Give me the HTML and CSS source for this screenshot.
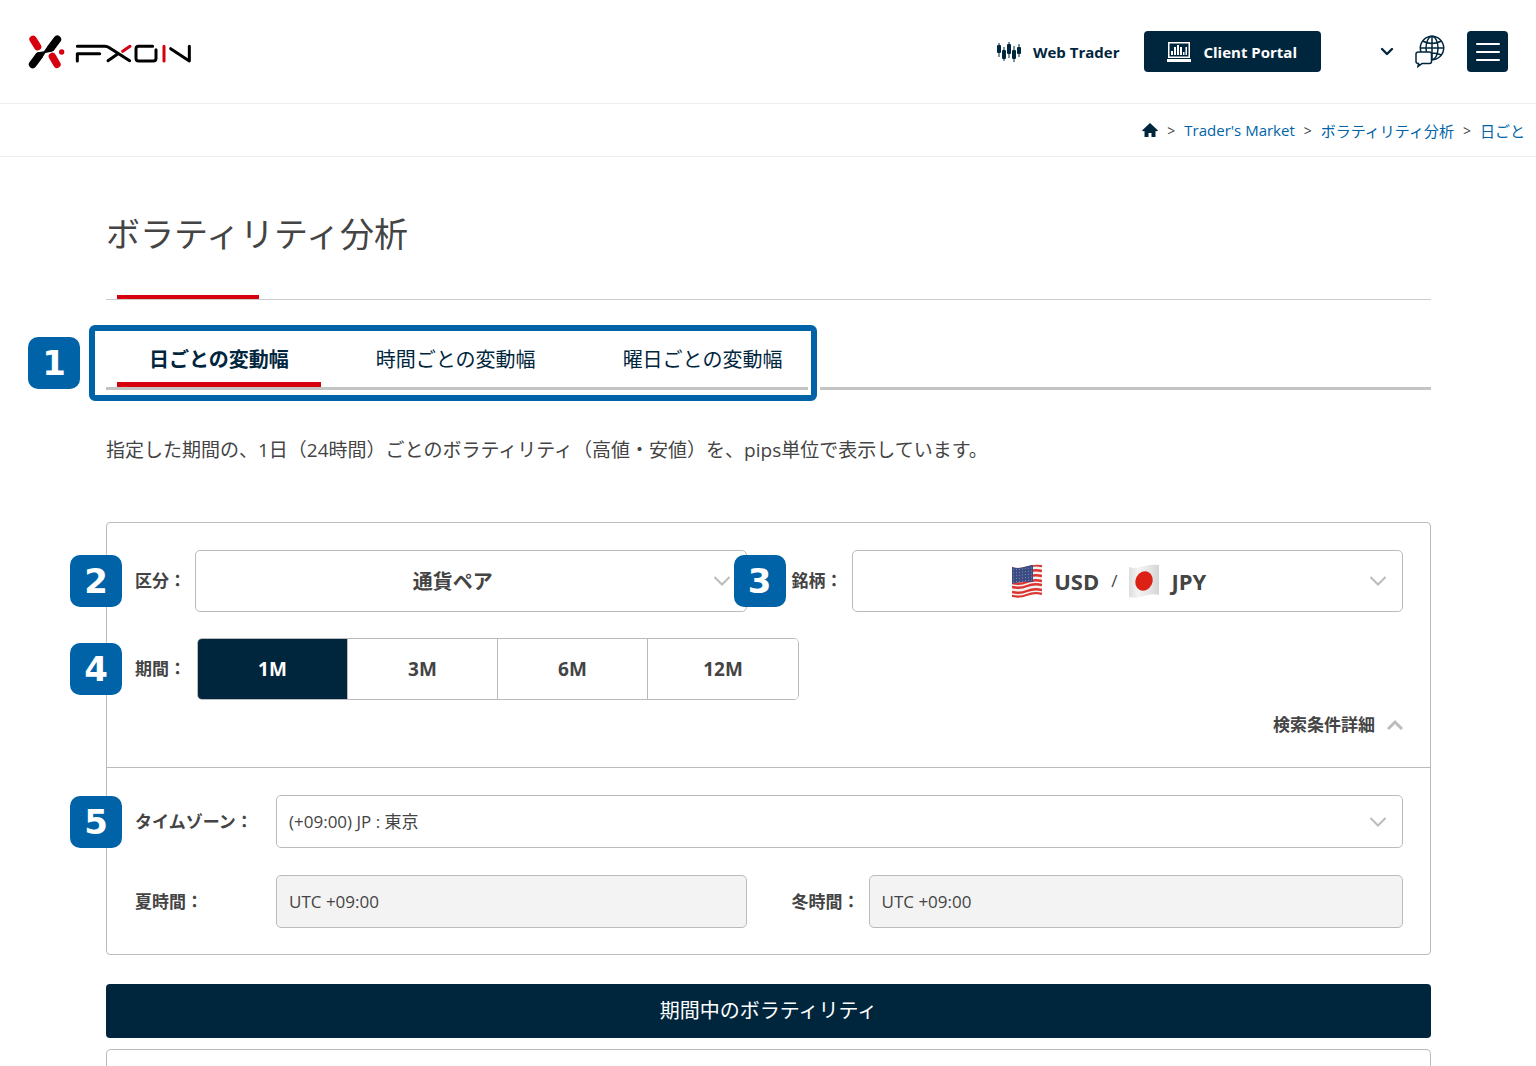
FILE: index.html
```html
<!DOCTYPE html>
<html lang="ja">
<head>
<meta charset="utf-8">
<meta name="viewport" content="width=device-width, initial-scale=1">
<title>ボラティリティ分析 | FXON</title>
<link rel="stylesheet" href="styles.css">
</head>
<body>
<header class="header">
  <a class="logo" href="#" aria-label="FXON">
    <svg viewBox="54 44 492 100" width="164" height="34" fill="none" stroke-linecap="round" stroke-linejoin="round">
      <path d="M69 56L83 78" stroke="#d7000f" stroke-width="22"/>
      <path d="M127 107L141 131" stroke="#d7000f" stroke-width="22"/>
      <path d="M142 56L124 80M86 107L68 131" stroke="#000" stroke-width="23"/>
      <path d="M115 73L102 92L84 95Q79 97 76 101L95 114L106 97L124 93Q130 92 134 87Z" fill="#000"/>
      <circle cx="155" cy="94" r="8" fill="#d7000f"/>
      <g stroke="#000" stroke-width="9">
        <path d="M202 77H284Q292 77 298 81L359 120M202 121V99H269M294 120L324 99"/>
        <path d="M428 77H386Q378 77 378 85V113Q378 121 386 121H430Q438 121 438 113V87"/>
        <path d="M482 84L538 121V77"/>
      </g>
      <path d="M338 92L360 77M462 77V121" stroke="#d7000f" stroke-width="9"/>
    </svg>
  </a>
  <nav class="header-nav" aria-label="メイン">
    <a class="trader" href="#">
      <svg width="25" height="20" viewBox="0 0 25 20" fill="#00263e" aria-hidden="true">
        <path d="M1.500 1h1v14h-1zM6.500 5h1v14h-1zM11.500 0h1v16h-1zM16.500 4h1v16h-1zM21.500 2h1v13h-1z"/>
        <rect x="0" y="3" width="4" height="8" rx="1"/><rect x="5" y="8" width="4" height="9" rx="1"/><rect x="10" y="2" width="4" height="10" rx="1"/><rect x="15" y="8" width="4" height="9" rx="1"/><rect x="20" y="5" width="4" height="7" rx="1"/>
      </svg>
      Web Trader
    </a>
    <a class="portal" href="#">
      <svg width="24" height="20" viewBox="0 0 24 20" fill="#fff" aria-hidden="true">
        <path d="M1 0h22v16H1zM2.500 1.500v13h19v-13z" fill-rule="evenodd"/>
        <path d="M4 9h2v4H4zM7 5h2v8H7zM10 3h2v10h-2zM13 5h2v8h-2zM16 10h1.500v3H16zM18.500 5h1.500v8h-1.500zM0 17h24v3H0z"/>
      </svg>
      Client Portal
    </a>
    <button class="plain account" type="button" aria-label="アカウント">
      <svg width="14" height="10" viewBox="0 0 14 10" fill="none" stroke="#00263e" stroke-width="2.400" stroke-linecap="round" stroke-linejoin="round"><path d="M2 2L7 7L12 2"/></svg>
    </button>
    <button class="plain language" type="button" aria-label="言語">
      <svg width="30" height="34" viewBox="0 0 30 34" fill="none" stroke="#00263e" stroke-width="1.500">
        <circle cx="17" cy="13" r="11.700"/><ellipse cx="17" cy="13" rx="6" ry="11.700"/><path d="M17 1V25M5.500 13H29M7.500 6Q17 11 26.500 6M7.500 20Q17 16 26.500 20"/>
        <path d="M3.500 17H14.500Q16.500 17 16.500 19V26.500Q16.500 28.500 14.500 28.500H7L3 31.500L3.500 28.500Q1 28.500 1 26.500V19Q1 17 3.500 17Z" fill="#fff"/>
        <path d="M3.500 29H7L2.800 32Z" fill="#00263e" stroke="none"/>
      </svg>
    </button>
    <button class="menu" type="button" aria-label="メニュー">
      <svg width="24" height="20" viewBox="0 0 24 20" stroke="#fff" stroke-width="2" stroke-linecap="round"><path d="M1 2H23M1 10H23M1 18H23"/></svg>
    </button>
  </nav>
</header>

<nav class="breadcrumb" aria-label="パンくず">
  <a class="home" href="#" aria-label="ホーム"><svg width="16" height="14" viewBox="0 0 16 14" fill="#00263e"><path d="M8 0L16 7.500Q15 8.500 13.500 8V14H9.500V10H6.500V14H2.500V8Q1 8.500 0 7.500Z"/></svg></a>
  <span>&gt;</span><a href="#">Trader's Market</a>
  <span>&gt;</span><a href="#">ボラティリティ分析</a>
  <span>&gt;</span><a href="#">日ごと</a>
</nav>

<main class="main">
  <h1 class="title">ボラティリティ分析</h1>

  <div class="tabs-area">
    <nav class="tabs" aria-label="変動幅">
      <a class="tab tab-active" href="#" aria-current="page">日ごとの変動幅</a>
      <a class="tab" href="#">時間ごとの変動幅</a>
      <a class="tab" href="#">曜日ごとの変動幅</a>
    </nav>
    <div class="tabs-frame"></div>
    <span class="badge badge-tabs">1</span>
  </div>

  <p class="lead">指定した期間の、1日（24時間）ごとのボラティリティ（高値・安値）を、pips単位で表示しています。</p>

  <form class="filters">
    <div class="basic">
      <div class="row">
        <span class="badge">2</span>
        <div class="field">
          <label class="label" for="category">区分：</label>
          <div class="picker">
            <select class="control tall centered" id="category"><option>通貨ペア</option></select>
            <svg class="arrow" width="18" height="12" viewBox="0 0 18 12"><path d="M1.500 2L9 9.500L16.500 2"/></svg>
          </div>
        </div>
        <div class="field">
          <span class="badge badge-symbol">3</span>
          <span class="label" id="symbol-label">銘柄：</span>
          <div class="picker">
            <button class="control tall symbol" type="button" aria-haspopup="listbox" aria-labelledby="symbol-label symbol">
              <span class="pair" id="symbol">
                <svg width="30" height="34" viewBox="0 0 30 34" aria-hidden="true">
                  <defs>
                    <clipPath id="wave"><path d="M0 3Q7 5 14 2.500T30 1V31Q22 29 15 32T0 33Z"/></clipPath>
                    <linearGradient id="cloth"><stop offset="0" stop-color="#ddd"/><stop offset=".3" stop-color="#f4f4f4"/><stop offset=".65" stop-color="#e6e6e6"/><stop offset="1" stop-color="#d4d4d4"/></linearGradient>
                  </defs>
                  <g clip-path="url(#wave)">
                    <path d="M0 0H30V34H0Z" fill="#f3f0f0"/>
                    <path d="M0 4Q8 6 15 3T30 2M0 9Q8 11 15 8T30 7M0 14Q8 16 15 13T30 12M0 19Q8 21 15 18T30 17M0 23Q8 25 15 22T30 21M0 28Q8 30 15 27T30 26M0 32Q8 34 15 31T30 30" fill="none" stroke="#dc3430" stroke-width="2.400"/>
                    <path d="M0 0H21V18Q10 17 0 20Z" fill="#3b4b83"/>
                    <path d="M1 6L20 4M1 9L20 7M1 12L20 10M1 15L20 13M1 18L20 16" stroke="#8490b6" stroke-width="1" stroke-dasharray="1 2"/>
                  </g>
                </svg>
                <b>USD</b><span class="slash">/</span>
                <svg width="30" height="34" viewBox="0 0 30 34" aria-hidden="true">
                  <g clip-path="url(#wave)"><path d="M0 0H30V34H0Z" fill="url(#cloth)"/></g>
                  <ellipse cx="15" cy="17" rx="8.500" ry="10" transform="rotate(25 15 17)" fill="#dc2217"/>
                </svg>
                <b>JPY</b>
              </span>
            </button>
            <svg class="arrow" width="18" height="12" viewBox="0 0 18 12"><path d="M1.500 2L9 9.500L16.500 2"/></svg>
          </div>
        </div>
      </div>
      <div class="row-period">
        <span class="badge">4</span>
        <span class="label" id="period-label">期間：</span>
        <div class="segments" role="group" aria-labelledby="period-label">
          <button class="segment segment-active" type="button" aria-pressed="true">1M</button>
          <button class="segment" type="button" aria-pressed="false">3M</button>
          <button class="segment" type="button" aria-pressed="false">6M</button>
          <button class="segment" type="button" aria-pressed="false">12M</button>
        </div>
      </div>
      <button class="plain details" type="button" aria-expanded="true">検索条件詳細
        <svg width="16" height="12" viewBox="0 0 16 12" fill="none" stroke="#bbb" stroke-width="3"><path d="M1 10L8 3L15 10"/></svg>
      </button>
    </div>
    <div class="advanced">
      <div class="zone">
        <span class="badge">5</span>
        <label class="label label-wide" for="zone">タイムゾーン：</label>
        <div class="picker">
          <select class="control" id="zone"><option>(+09:00) JP : 東京</option></select>
          <svg class="arrow" width="18" height="12" viewBox="0 0 18 12"><path d="M1.500 2L9 9.500L16.500 2"/></svg>
        </div>
      </div>
      <div class="row">
        <div class="field">
          <label class="label label-wide" for="summer">夏時間：</label>
          <input class="control readonly" id="summer" type="text" value="UTC +09:00" readonly>
        </div>
        <div class="field">
          <label class="label label-winter" for="winter">冬時間：</label>
          <input class="control readonly" id="winter" type="text" value="UTC +09:00" readonly>
        </div>
      </div>
    </div>
  </form>

  <h2 class="result-title">期間中のボラティリティ</h2>
  <section class="result" aria-label="期間中のボラティリティ"></section>
</main>
</body>
</html>
```

FILE: styles.css
```css
* {
  box-sizing: border-box;
}

body {
  margin: 0;
  min-height: 100vh;
  display: flex;
  flex-direction: column;
  background: #fff;
  color: #444;
  font-family: "Open Sans", "Noto Sans CJK JP", sans-serif;
}

a {
  color: #0063a8;
  text-decoration: none;
}

svg {
  display: block;
  flex: none;
}

button,
select,
input {
  font: inherit;
  color: inherit;
}

.plain {
  padding: 0;
  border: 0;
  background: none;
}

/* Header */
.header {
  display: flex;
  align-items: center;
  justify-content: space-between;
  height: 104px;
  padding: 0 28px;
  border-bottom: 1px solid #eee;
}

.header-nav {
  display: flex;
  align-items: center;
}

.trader,
.portal {
  display: flex;
  align-items: center;
  gap: 11px;
  font-size: 15px;
  line-height: 20px;
  font-weight: 700;
  white-space: nowrap;
}

.trader {
  margin-right: 25px;
  color: #00263e;
}

.portal {
  height: 41px;
  padding: 0 24px 0 23px;
  gap: 12px;
  border-radius: 4px;
  background: #00263e;
  color: #fff;
}

.account {
  margin-left: 59px;
}

.language {
  margin-left: 21px;
}

.menu {
  display: flex;
  align-items: center;
  justify-content: center;
  width: 41px;
  height: 41px;
  margin-left: 22px;
  padding: 0;
  border: 0;
  border-radius: 4px;
  background: #00263e;
}

.breadcrumb {
  display: flex;
  align-items: center;
  justify-content: flex-end;
  gap: 9px;
  height: 53px;
  padding: 0 11px;
  border-bottom: 1px solid #eee;
  font-size: 15px;
}

.breadcrumb span {
  font-size: 14px;
}

/* Content */
.main {
  flex: 1;
  display: flex;
  flex-direction: column;
  padding: 0 105px 0 106px;
}

.title {
  position: relative;
  margin: 0;
  padding: 52px 0 40px;
  border-bottom: 1px solid #ccc;
  font-size: 34px;
  line-height: 50px;
  font-weight: 400;
}

.title::after {
  content: "";
  position: absolute;
  left: 11px;
  bottom: 0;
  width: 142px;
  height: 4px;
  background: #d7000f;
}

.tabs-area {
  position: relative;
  margin-top: 32px;
}

.tabs {
  display: flex;
  gap: 23px;
  padding-left: 11px;
  border-bottom: 3px solid #c4c4c4;
}

.tab {
  height: 55px;
  padding: 0 32px;
  border-bottom: 5px solid transparent;
  color: #00263e;
  font-size: 20px;
  line-height: 56px;
  font-weight: 400;
  white-space: nowrap;
}

.tab-active {
  border-bottom-color: #d7000f;
  font-weight: 700;
}

.tabs-frame {
  position: absolute;
  left: -17px;
  top: -7px;
  width: 728px;
  height: 76px;
  border: 6px solid #0063a8;
  border-radius: 6px;
  box-shadow: 3px 0 0 #fff, inset -3px 0 0 #fff;
}

.badge {
  position: absolute;
  left: -65px;
  top: 50%;
  width: 52px;
  height: 52px;
  margin-top: -26px;
  border-radius: 10px;
  background: #0063a8;
  color: #fff;
  font: 700 34px/52px "DejaVu Sans", sans-serif;
  text-align: center;
}

.badge-tabs {
  left: -78px;
  margin-top: -24px;
}

.badge-symbol {
  left: -58px;
}

.lead {
  margin: 44px 0 0;
  font-size: 19px;
  line-height: 32px;
}

/* Search conditions */
.filters {
  margin-top: 56px;
  border: 1px solid #bbb;
  border-radius: 4px;
}

.basic {
  padding: 27px 27px 30px 28px;
  border-bottom: 1px solid #bbb;
}

.advanced {
  padding: 27px 27px 26px 28px;
}

.row {
  position: relative;
  display: grid;
  grid-template-columns: 1fr 1fr;
  gap: 45px;
}

.field,
.zone,
.row-period {
  position: relative;
  display: flex;
  align-items: center;
}

.row-period {
  margin-top: 26px;
}

.zone {
  margin-bottom: 27px;
}

.label {
  flex: none;
  width: 60px;
  font-size: 17px;
  line-height: 24px;
  font-weight: 700;
  white-space: nowrap;
}

.label-wide {
  width: 141px;
}

.label-winter {
  width: 77px;
}

.picker {
  position: relative;
  flex: 1;
}

.control {
  display: block;
  flex: 1;
  width: 100%;
  min-width: 0;
  height: 53px;
  padding: 0 12px;
  border: 1px solid #bbb;
  border-radius: 5px;
  background: #fff;
  font-size: 17px;
  appearance: none;
}

.tall {
  height: 62px;
  font-size: 20px;
}

.centered {
  padding-right: 48px;
  font-weight: 700;
  text-align-last: center;
}

.readonly {
  background: #f3f3f3;
}

.arrow {
  position: absolute;
  right: 16px;
  top: 50%;
  margin-top: -6px;
  fill: none;
  stroke: #bbb;
  stroke-width: 2;
  pointer-events: none;
}

.symbol {
  padding-right: 48px;
  font-size: 22px;
}

.pair {
  display: flex;
  align-items: center;
  justify-content: center;
  gap: 12px;
  line-height: 34px;
}

.slash {
  font-size: 17px;
}

.segments {
  display: flex;
  overflow: hidden;
  margin-left: 2px;
  border: 1px solid #bbb;
  border-radius: 5px;
}

.segment {
  width: 150px;
  height: 60px;
  padding: 0;
  border: 0;
  border-right: 1px solid #bbb;
  background: #fff;
  font-size: 19px;
  font-weight: 700;
}

.segment:last-child {
  border-right: 0;
}

.segment-active {
  background: #00263e;
  color: #fff;
}

.details {
  display: flex;
  align-items: center;
  gap: 12px;
  margin: 13px 0 0 auto;
  font-size: 17px;
  line-height: 24px;
  font-weight: 700;
}

.result-title {
  margin: 29px 0 11px;
  border-radius: 4px;
  background: #00263e;
  color: #fff;
  font-size: 20px;
  line-height: 54px;
  font-weight: 400;
  text-align: center;
}

.result {
  flex: 1;
  min-height: 16px;
  border: 1px solid #bbb;
  border-bottom: 0;
  border-radius: 5px 5px 0 0;
}
```
